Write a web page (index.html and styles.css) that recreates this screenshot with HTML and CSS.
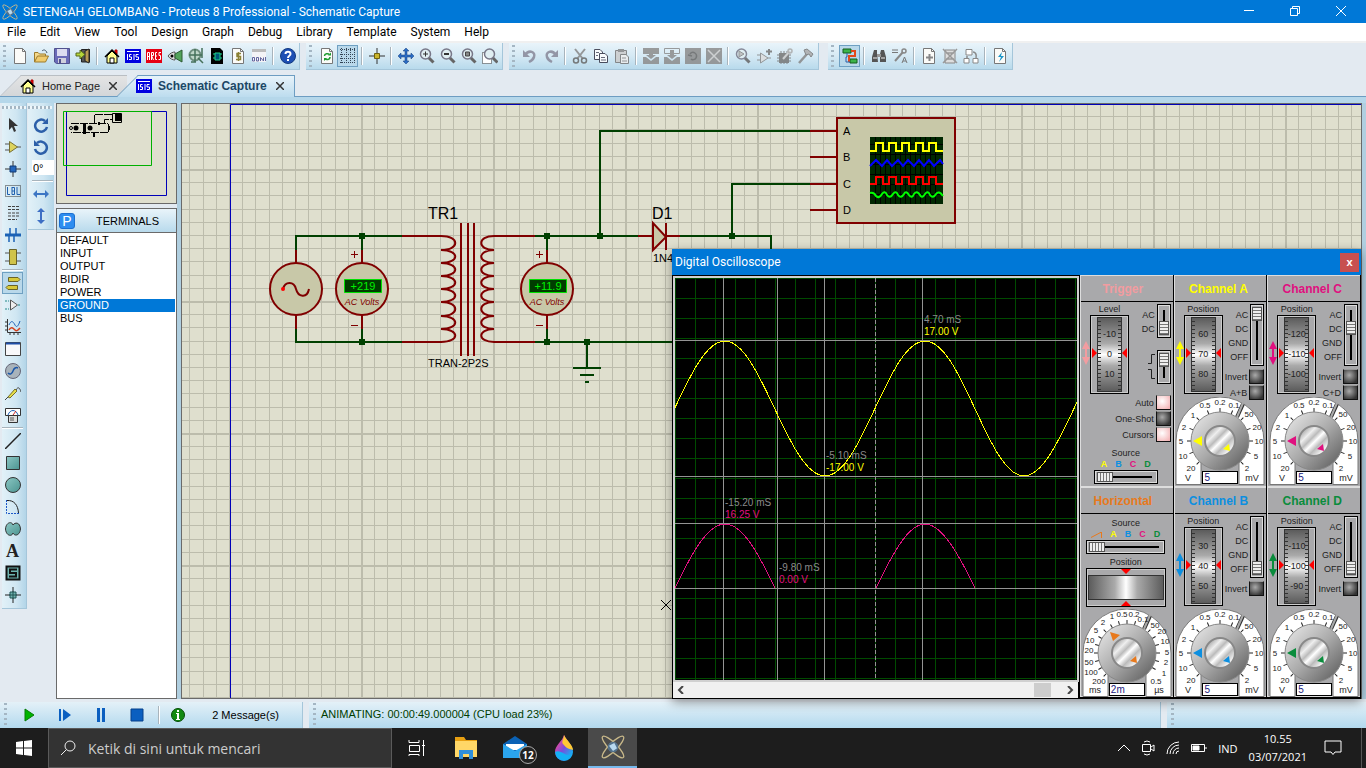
FILE: index.html
```html
<!DOCTYPE html>
<html lang="id">
<head>
  <meta charset="UTF-8" />
  <meta name="viewport" content="width=device-width, initial-scale=1" />
  <title>SETENGAH GELOMBANG - Proteus 8 Professional - Schematic Capture</title>
  <link rel="stylesheet" href="styles.css">
</head>
<body>

<!-- Shared drawings -->
<svg class="defs" aria-hidden="true">
  <defs>
    <linearGradient id="metal" x1="0" y1="0" x2="1" y2="1">
      <stop offset="0" stop-color="#eee"/><stop offset=".5" stop-color="#aaa"/><stop offset="1" stop-color="#555"/>
    </linearGradient>
    <linearGradient id="cap" x1="0" y1="0" x2="1" y2="1">
      <stop offset=".1" stop-color="#999"/><stop offset=".3" stop-color="#eee"/><stop offset=".42" stop-color="#bbb"/><stop offset=".52" stop-color="#fff"/><stop offset=".65" stop-color="#bbb"/><stop offset=".8" stop-color="#eee"/><stop offset="1" stop-color="#888"/>
    </linearGradient>
    <linearGradient id="teal" x1="0" y1="0" x2="1" y2="1">
      <stop offset="0" stop-color="#8cc7c4"/><stop offset="1" stop-color="#4b9490"/>
    </linearGradient>
    <linearGradient id="drop" x1="0" y1="0" x2="1" y2="1">
      <stop offset=".2" stop-color="#e8489b"/><stop offset=".5" stop-color="#7a4ddb"/><stop offset=".8" stop-color="#1fa7f2"/>
    </linearGradient>
    <pattern id="grid" x="98" y="38" width="132" height="132" patternUnits="userSpaceOnUse">
      <path d="M13.5 0V132M26.5 0V132M40.5 0V132M53.5 0V132M66.5 0V132M79.5 0V132M92.5 0V132M106.5 0V132M119.5 0V132M0 13.5H132M0 26.5H132M0 40.5H132M0 53.5H132M0 66.5H132M0 79.5H132M0 92.5H132M0 106.5H132M0 119.5H132" stroke="#bcbcac"/>
      <path d="M0 1H132M1 0V132" stroke="#bcbcac" stroke-width="2"/>
    </pattern>
    <pattern id="div" width="20" height="20" patternUnits="userSpaceOnUse">
      <path d="M.5 0V20M0 .5H20" stroke="#004a00"/>
    </pattern>
    <symbol id="proteus" viewBox="0 0 18 18">
      <g fill="none" stroke="currentColor"><ellipse cx="9" cy="9" rx="11" ry="3" transform="rotate(45 9 9)"/><ellipse cx="9" cy="9" rx="11" ry="3" transform="rotate(-45 9 9)"/></g>
      <circle cx="9" cy="9" r="4" fill="#52718c"/><path d="M6 8L10 6L12 10L9 12Z" fill="#b9d9ef"/>
    </symbol>
    <symbol id="isis" viewBox="0 0 16 14">
      <rect width="16" height="14" fill="#0000e0"/><path d="M2.5 5V11M6.5 5.500H4.500V8H6.500V10.500H4M9 5V11M13.500 5.500H11V8H13.500V10.500H11M2 2.500H14" fill="none" stroke="#fff"/>
    </symbol>
    <symbol id="house" viewBox="0 0 16 16">
      <path d="M11 2H13V6H11Z" fill="red" stroke="#a00"/><path d="M3 8L8 3L13 8V15H3Z" fill="#ffff90" stroke="#000"/><path d="M1 9L8 2L15 9" fill="none" stroke="#000" stroke-width="1.500"/><path d="M6 10H10V15H6Z" fill="#fff" stroke="#000"/>
    </symbol>
    <symbol id="loupe" viewBox="0 0 16 16">
      <path d="M9.500 9.500L14.500 14.500" stroke="#666" stroke-width="3"/><circle cx="6.500" cy="6" r="5" fill="#e0eef2" stroke="#778" stroke-width="1.500"/>
    </symbol>
    <symbol id="page" viewBox="0 0 16 16">
      <path d="M2.500.500H10.500L13.500 3.500V15.500H2.500Z" fill="#fbfbf8" stroke="#777"/><path d="M10.500.500V3.500H13.500" fill="none" stroke="#777"/>
    </symbol>
    <symbol id="updown" viewBox="0 0 8 24">
      <path d="M4 0L8 8H5V16H8L4 24L0 16H3V8H0Z" fill="currentColor"/>
    </symbol>
    <symbol id="volts-dial" viewBox="-45 -44 90 88">
      <path d="M-44 43.500V0A44 44 0 0 1 44 0V43.500H19V20H-19V43.500Z" fill="#fff" stroke="#777"/>
      <path d="M17 -24L23 -37" stroke="#333" stroke-width="4"/><path d="M17 -24L23 -38" stroke="#aaa" stroke-width="2"/>
      <g stroke="#222"><path id="tick" d="M-33 0H-29"/><use href="#tick" transform="rotate(22.500)"/><use href="#tick" transform="rotate(45)"/><use href="#tick" transform="rotate(67.500)"/><use href="#tick" transform="rotate(90)"/><use href="#tick" transform="rotate(112.500)"/><use href="#tick" transform="rotate(135)"/><use href="#tick" transform="rotate(157.500)"/><use href="#tick" transform="rotate(180)"/><use href="#tick" transform="rotate(202.500)"/><use href="#tick" transform="rotate(225)"/><use href="#tick" transform="rotate(-22.500)"/><use href="#tick" transform="rotate(-45)"/></g>
      <circle r="29" fill="url(#metal)" stroke="#888"/><circle r="15" fill="url(#cap)" stroke="#888" stroke-width="2"/>
      <path d="M-27 0L-18 -5V5ZM9 3L10 10L3 8Z" fill="currentColor"/>
      <g class="dial-text"><text x="-29" y="30">20</text><text x="-37" y="18">10</text><text x="-39" y="3">5</text><text x="-36" y="-11">2</text><text x="-27" y="-23">1</text><text x="-15" y="-33">0.5</text><text x="0" y="-36">0.2</text><text x="14" y="-33">0.1</text><text x="29" y="-24">50</text><text x="37" y="-11">20</text><text x="39" y="3">10</text><text x="36" y="18">5</text><text x="27" y="30">2</text></g>
      <g class="dial-unit"><text x="-32" y="40">V</text><text x="32" y="40">mV</text></g>
    </symbol>
    <symbol id="time-dial" viewBox="-45 -44 90 88">
      <path d="M-44 43.500V0A44 44 0 0 1 44 0V43.500H19V20H-19V43.500Z" fill="#fff" stroke="#777"/>
      <path d="M17 -24L23 -37" stroke="#333" stroke-width="4"/><path d="M17 -24L23 -38" stroke="#aaa" stroke-width="2"/>
      <g stroke="#222"><use href="#tick"/><use href="#tick" transform="rotate(15)"/><use href="#tick" transform="rotate(30)"/><use href="#tick" transform="rotate(45)"/><use href="#tick" transform="rotate(60)"/><use href="#tick" transform="rotate(75)"/><use href="#tick" transform="rotate(90)"/><use href="#tick" transform="rotate(105)"/><use href="#tick" transform="rotate(135)"/><use href="#tick" transform="rotate(150)"/><use href="#tick" transform="rotate(165)"/><use href="#tick" transform="rotate(180)"/><use href="#tick" transform="rotate(195)"/><use href="#tick" transform="rotate(210)"/><use href="#tick" transform="rotate(-15)"/><use href="#tick" transform="rotate(-30)"/><use href="#tick" transform="rotate(-45)"/></g>
      <circle r="29" fill="url(#metal)" stroke="#888"/><circle r="15" fill="url(#cap)" stroke="#888" stroke-width="2"/>
      <path d="M-17 -21L-7 -18L-14 -12ZM9 3L10 10L3 8Z" fill="currentColor"/>
      <g class="dial-text"><text x="-28" y="31">200</text><text x="-36" y="22">100</text><text x="-38" y="12">50</text><text x="-38" y="0">20</text><text x="-37" y="-10">10</text><text x="-31" y="-20">5</text><text x="-24" y="-28">2</text><text x="-15" y="-34">1</text><text x="-5" y="-36">0.5</text><text x="7" y="-36">0.2</text><text x="16" y="-31">0.1</text><text x="28" y="-25">50</text><text x="35" y="-19">20</text><text x="38" y="-9">10</text><text x="40" y="2">5</text><text x="39" y="12">2</text><text x="37" y="23">1</text><text x="29" y="31">0.5</text></g>
      <g class="dial-unit"><text x="-32" y="40">ms</text><text x="32" y="40">µs</text></g>
    </symbol>
  </defs>
</svg>

<header class="titlebar">
  <svg class="app-icon"><use href="#proteus"/></svg>
  <h1>SETENGAH GELOMBANG - Proteus 8 Professional - Schematic Capture</h1>
  <button aria-label="Minimize"><svg viewBox="0 0 12 12"><path d="M1 5.500H11" /></svg></button>
  <button aria-label="Restore"><svg viewBox="0 0 12 12"><path d="M1.500 3.500H8.500V10.500H1.500ZM3.500 3V1.500H10.500V8.500H9"/></svg></button>
  <button aria-label="Close"><svg viewBox="0 0 12 12"><path d="M1 1L11 11M11 1L1 11"/></svg></button>
</header>

<nav class="menubar">
  <a href="#">File</a><a href="#">Edit</a><a href="#">View</a><a href="#">Tool</a><a href="#">Design</a><a href="#">Graph</a><a href="#">Debug</a><a href="#">Library</a><a href="#">Template</a><a href="#">System</a><a href="#">Help</a>
</nav>

<div class="toolbars">
  <div class="group first">
    <button aria-label="New"><svg viewBox="0 0 16 16"><use href="#page"/></svg></button>
    <button aria-label="Open"><svg viewBox="0 0 16 16"><path d="M1.500 14V4.500H5L6.500 6H12.500V8" fill="#f5d98b" stroke="#9c7a2b"/><path d="M1.500 14L4.500 8H15.500L12.500 14Z" fill="#f0cb6c" stroke="#9c7a2b"/><path d="M9 3C11 1 13 2 14 5" fill="none" stroke="#456"/></svg></button>
    <button aria-label="Save"><svg viewBox="0 0 16 16"><path d="M.500.500H15.500V15.500H2.500L.500 14Z" fill="#6a6bb8" stroke="#51528e"/><path d="M3 1H13V8H3Z" fill="#dcdcf0"/><path d="M4 10H12V15H4Z" fill="#d0d0dc"/><path d="M5 11H7V15H5Z" fill="#51528e"/></svg></button>
    <button aria-label="Exit"><svg viewBox="0 0 16 16"><path d="M6.500 1.500H14.500V14H6.500Z" fill="#555" stroke="#222"/><path d="M10 3L14 1V15L10 13Z" fill="#b99a54" stroke="#222"/><path d="M1 5H5V2L10 6.500L5 11V8H1Z" fill="#b6d63a" stroke="#55661c"/></svg></button>
    <i class="sep"></i>
    <button aria-label="Home"><svg viewBox="0 0 16 16"><use href="#house"/></svg></button>
    <button aria-label="Schematic"><svg viewBox="0 0 16 14"><use href="#isis"/></svg></button>
    <button aria-label="PCB layout"><svg viewBox="0 0 16 16"><path d="M0 1H16V15H0Z" fill="#e60012"/><path d="M1.500 12V4.500H3.500V12M1 8.500H4M5.500 12V4.500H7.500V7.500H5.500L7.500 12M11 4.500H9.500V11.500H11M9.500 8H11M15 4.500H13V7.500H14.500V11.500H12.500" fill="none" stroke="#fff"/></svg></button>
    <button aria-label="3D viewer"><svg viewBox="0 0 16 16"><path d="M1 8C3 5 6 4 8 4V12C6 12 3 11 1 8Z" fill="#ddd" stroke="#555"/><circle cx="5" cy="8" r="1.500"/><path d="M8 6L15 2V14L8 10Z" fill="#52a35b" stroke="#2c5a32"/></svg></button>
    <button aria-label="Gerber viewer"><svg viewBox="0 0 16 16"><circle cx="7" cy="7" r="5.500" fill="#bfd6c8" stroke="#6f8f7f" stroke-width="2"/><path d="M1 7H14M7 1V14M10 10L15 15M14 0V10M3 14H8" stroke="#45705a" stroke-width="1.500"/></svg></button>
    <button aria-label="Design explorer"><svg viewBox="0 0 16 16"><path d="M2 0H11L14 3V16H2Z" fill="#000"/><path d="M6 5H11V12H6ZM4 6H6M4 10H6M11 6H13M11 10H13" fill="#057" stroke="#1fd08b"/></svg></button>
    <button aria-label="Bill of materials"><svg viewBox="0 0 16 16"><use href="#page"/><path d="M11 5.500H7V8.500H10.500V11.500H6M8.500 4V13" fill="none" stroke="#8b8133" stroke-width="1.500"/></svg></button>
    <button aria-label="Source code"><svg viewBox="0 0 16 16"><path d="M1 1H15V4H1Z" fill="#bbb"/><path d="M1 4H15V14H1Z" fill="#f3f3f6"/><path d="M1.500 9.500H3.500V13H1.500ZM5.500 9.500H7.500V13H5.500ZM9.500 13V9.500L12.500 13V9.500M14.500 9V13" fill="none" stroke="#63669f"/></svg></button>
    <i class="sep"></i>
    <button aria-label="Help"><svg viewBox="0 0 16 16"><circle cx="8" cy="8" r="7.500" fill="#1e50b4" stroke="#123a80"/><path d="M5.500 6C5.500 3 10.500 3 10.500 6C10.500 8 8 7.500 8 10" fill="none" stroke="#fff" stroke-width="2"/><path d="M7 11H9V13H7Z" fill="#fff"/></svg></button>
  </div>

  <div class="group">
    <button aria-label="Redraw"><svg viewBox="0 0 16 16"><use href="#page"/><path d="M5.500 8C5.500 5.500 9 5 10.500 6.500M11 9C11 12 7 12 6 10.500" fill="none" stroke="#1d9b2d" stroke-width="1.500"/><path d="M9 7.500H12V4.500ZM8 10H5V13Z" fill="#1d9b2d"/></svg></button>
    <button class="on" aria-label="Grid"><svg viewBox="0 0 16 16"><path d="M0 1.500H16M0 6.500H16M0 10.500H16M0 14.500H16M1.500 0V16M6.500 0V16M10.500 0V16M14.500 0V16" stroke="#345" stroke-dasharray="1 1"/></svg></button>
    <i class="sep"></i>
    <button aria-label="Origin"><svg viewBox="0 0 16 16"><path d="M8 0V16M0 8H16" stroke="#333"/><path d="M5.500 5.500H10.500V10.500H5.500Z" fill="#c9b52c" stroke="#6f6210"/></svg></button>
    <i class="sep"></i>
    <button aria-label="Pan"><svg viewBox="0 0 16 16"><path d="M8 0L11 3H9V7H13V5L16 8L13 11V9H9V13H11L8 16L5 13H7V9H3V11L0 8L3 5V7H7V3H5Z" fill="#2a6cc4" stroke="#173f7d" stroke-width=".500"/></svg></button>
    <button aria-label="Zoom in"><svg viewBox="0 0 16 16"><use href="#loupe"/><path d="M4 6H9M6.500 3.500V8.500" stroke="#333"/></svg></button>
    <button aria-label="Zoom out"><svg viewBox="0 0 16 16"><use href="#loupe"/><path d="M4 6H9" stroke="#333" stroke-width="2"/></svg></button>
    <button aria-label="Zoom all"><svg viewBox="0 0 16 16"><use href="#loupe"/><path d="M4.500 4H8.500V8H4.500Z" fill="#888" stroke="#444"/></svg></button>
    <button aria-label="Zoom area"><svg viewBox="0 0 16 16"><path d="M.500 4.500H9.500V15.500H.500Z" fill="#fff" stroke="#333" stroke-dasharray="1 1"/><use href="#loupe" x="1"/></svg></button>
  </div>

  <div class="group dim">
    <button aria-label="Undo"><svg viewBox="0 0 16 16"><path d="M3 7C7 1 14 4 12 9C11 12 9 13 7 14" fill="none" stroke="#889" stroke-width="2.500"/><path d="M1 2V9H8Z" fill="#889"/></svg></button>
    <button aria-label="Redo"><svg viewBox="0 0 16 16"><path d="M13 7C9 1 2 4 4 9C5 12 7 13 9 14" fill="none" stroke="#889" stroke-width="2.500"/><path d="M15 2V9H8Z" fill="#889"/></svg></button>
    <i class="sep"></i>
    <button aria-label="Cut"><svg viewBox="0 0 16 16"><path d="M3 1L11 11M13 1L5 11" stroke="#888" stroke-width="2"/><circle cx="4" cy="12.500" r="2.500" fill="none" stroke="#666" stroke-width="1.500"/><circle cx="12" cy="12.500" r="2.500" fill="none" stroke="#666" stroke-width="1.500"/></svg></button>
    <button aria-label="Copy"><svg viewBox="0 0 16 16"><path d="M1.500 1.500H7L9.500 4V11.500H1.500Z" fill="#fff" stroke="#334"/><path d="M6.500 5.500H12L14.500 8V14.500H6.500Z" fill="#fff" stroke="#334"/><path d="M3 4.500H6M3 7.500H5M8 9.500H12M8 12H13" stroke="#556"/></svg></button>
    <button aria-label="Paste"><svg viewBox="0 0 16 16"><path d="M1.500 2.500H12.500V14.500H1.500Z" fill="#ccc" stroke="#777"/><path d="M4 1H10V4H4Z" fill="#888"/><path d="M6.500 6.500H12L14.500 9V15.500H6.500Z" fill="#eee" stroke="#777"/><path d="M8 10H12M8 13H13" stroke="#888"/></svg></button>
    <i class="sep"></i>
    <button aria-label="Block copy"><svg viewBox="0 0 16 16"><path d="M0 0H16V6H10V7H13L8 11L3 7H6V6H0ZM0 9H3L8 13L13 9H16V16H0Z" fill="#8c8c8c"/></svg></button>
    <button aria-label="Block move"><svg viewBox="0 0 16 16"><path d="M.500.500H15.500V5.500H.500Z" fill="none" stroke="#8c8c8c"/><path d="M6 2H10V7H13L8 11L3 7H6ZM0 9H3L8 13L13 9H16V16H0Z" fill="#8c8c8c"/></svg></button>
    <button aria-label="Block rotate"><svg viewBox="0 0 16 16"><path d="M0 0H16V16H0Z" fill="#8c8c8c"/><path d="M5 6C8 2 13 6 11 10C10 12 7 12 6 11M3 7L7 8" fill="none" stroke="#666" stroke-width="1.500"/></svg></button>
    <button aria-label="Block delete"><svg viewBox="0 0 16 16"><path d="M0 0H16V16H0Z" fill="#8c8c8c"/><path d="M2 2L14 14M14 2L2 14" stroke="#ccc" stroke-width="1.500"/></svg></button>
    <i class="sep"></i>
    <button aria-label="Pick parts"><svg viewBox="0 0 16 16"><use href="#loupe"/><path d="M4 3L9 6L4 9Z" fill="#bbb" stroke="#888"/></svg></button>
    <button aria-label="Make device"><svg viewBox="0 0 16 16"><path d="M4.500 5V15L12 10ZM1 7H4M1 12H4M12 10H15" fill="#ddd" stroke="#888"/><path d="M10 3.500H16M13 1V7" stroke="#777" stroke-width="2"/></svg></button>
    <button aria-label="Packaging tool"><svg viewBox="0 0 16 16"><path d="M2 5H12V15H2Z" fill="#777"/><path d="M0 7H14M0 10H14M0 13H14M4 3V16M7 3V16M10 3V16" stroke="#777"/><path d="M6 11L13 3" stroke="#ccc" stroke-width="2"/><circle cx="13" cy="3" r="2" fill="none" stroke="#aaa" stroke-width="1.500"/></svg></button>
    <button aria-label="Decompose"><svg viewBox="0 0 16 16"><path d="M1 15L9 6" stroke="#888" stroke-width="2.500"/><path d="M6 2L9 1L15 6L13 9L11 6L8 7Z" fill="#aaa" stroke="#777"/></svg></button>
  </div>

  <div class="group last">
    <button class="on" aria-label="Wire autorouter"><svg viewBox="0 0 16 16"><path d="M1 1H9V5H1ZM8 11H15V15H8Z" fill="#3bb44a" stroke="#145c1e"/><path d="M9 3H13V8H7V13H8" fill="none" stroke="#e2491b" stroke-width="2"/><path d="M5 5V9H4V14H8" fill="none" stroke="#2a5fa8"/></svg></button>
    <i class="sep"></i>
    <button aria-label="Search"><svg viewBox="0 0 16 16"><path d="M3 2H6V6L7 14H1V9ZM10 2H13L15 9V14H9V6Z" fill="#555"/><path d="M6 6H10V9H6Z" fill="#999"/><path d="M2 10H6M10 10H14" stroke="#eee"/></svg></button>
    <button aria-label="Property assignment"><svg viewBox="0 0 16 16"><path d="M0 2H6M0 4.500H6" stroke="#777"/><path d="M3 13L11 4" stroke="#888" stroke-width="2"/><circle cx="12" cy="3" r="2" fill="none" stroke="#888" stroke-width="1.500"/><path d="M10 15L12.500 9L15 15M11 13H14" fill="none" stroke="#777"/></svg></button>
    <i class="sep"></i>
    <button aria-label="New sheet"><svg viewBox="0 0 16 16"><use href="#page"/><path d="M8.500 6V13M5 9.500H12" stroke="#888" stroke-width="2"/></svg></button>
    <button aria-label="Remove sheet"><svg viewBox="0 0 16 16"><path d="M3 2H13V15H3Z" fill="#ddd" stroke="#888"/><path d="M1 1L15 15M15 1L1 15M4 5H12M4 11H12" stroke="#999" stroke-width="1.500"/></svg></button>
    <button aria-label="Exit sheet"><svg viewBox="0 0 16 16"><path d="M3 1.500H9V7H3ZM1 10.500H6V15H1ZM10 10.500H15V15H10Z" fill="#fff" stroke="#888"/><path d="M4 10V8M13 10C14 6 12 4 10 4" fill="none" stroke="#888" stroke-width="1.500"/></svg></button>
    <i class="sep"></i>
    <button aria-label="Electrical check"><svg viewBox="0 0 16 16"><use href="#page"/><path d="M10 4L6 9H9L7 14L12 8H9Z" fill="#1b96c9"/></svg></button>
  </div>
</div>

<nav class="tabs">
  <div class="tab">
    <svg class="icon"><use href="#house"/></svg><a href="#">Home Page</a>
    <button aria-label="Close tab"><svg viewBox="0 0 8 8"><path d="M0 0L8 8M8 0L0 8"/></svg></button>
  </div>
  <div class="tab active">
    <svg class="icon"><use href="#isis"/></svg><a href="#">Schematic Capture</a>
    <button aria-label="Close tab"><svg viewBox="0 0 8 8"><path d="M0 0L8 8M8 0L0 8"/></svg></button>
  </div>
</nav>

<main class="workspace">
  <div class="mode-bar">
    <button aria-label="Selection"><svg viewBox="0 0 16 16"><path d="M4 1V13L7 10L9 15L11 14L9 9H13Z" fill="#333"/></svg></button>
    <button aria-label="Component"><svg viewBox="0 0 16 16"><path d="M0 5H4M0 11H4M12 8H16" stroke="#555"/><path d="M4.500 2.500V13.500L12.500 8Z" fill="#ddd35c" stroke="#777033"/></svg></button>
    <button aria-label="Junction dot"><svg viewBox="0 0 16 16"><path d="M8 0V16M0 8H16" stroke="#333"/><path d="M5 5H11V11H5Z" fill="#2467bd" stroke="#123a73"/></svg></button>
    <button aria-label="Wire label"><svg viewBox="0 0 16 16"><path d="M.500 2.500H15.500V13.500H.500Z" fill="none" stroke="#333" stroke-dasharray="1 1"/><path d="M2.500 4V11.500H5M7 4V11.500H9.500V4.500H7M7 8H9M12 4V11.500H15" fill="none" stroke="#1f5fae"/></svg></button>
    <button aria-label="Text script"><svg viewBox="0 0 16 16"><path d="M3 1.500H14M3 4.500H14M3 8H14M3 11H14M3 14.500H12" stroke="#444" stroke-dasharray="3 1"/></svg></button>
    <button aria-label="Bus"><svg viewBox="0 0 16 16"><path d="M0 8H16" stroke="#1b62b5" stroke-width="3"/><path d="M5 1V8M11 1V8M4 9V15M9 9V15" stroke="#1b62b5" stroke-width="1.500"/></svg></button>
    <button aria-label="Subcircuit"><svg viewBox="0 0 16 16"><path d="M0 4H4M0 12H4M12 4H16M12 12H16" stroke="#555"/><path d="M4.500.500H11.500V15.500H4.500Z" fill="#d0c44b" stroke="#6a6327"/></svg></button>
    <i class="sep"></i>
    <button class="on" aria-label="Terminals"><svg viewBox="0 0 16 16"><path d="M3.500 2.500H13L15 4.500L13 6.500H3.500ZM12.500 10.500H3L1 12.500L3 14.500H12.500Z" fill="#d6c83a" stroke="#6a6327"/></svg></button>
    <button aria-label="Device pins"><svg viewBox="0 0 16 16"><path d="M0 4H4M0 12H4M13 8H16" stroke="#288" stroke-dasharray="2 1"/><path d="M5.500 3V13L12.500 8Z" fill="#eee" stroke="#555"/></svg></button>
    <button aria-label="Graph"><svg viewBox="0 0 16 16"><path d="M2.500 0V13.500H16M0 3H2M0 7H2M0 11H2M5 14V16M9 14V16M13 14V16" fill="none" stroke="#333"/><path d="M4 6C6 1 8 2 10 6S14 5 15 2" fill="none" stroke="#1e62b8"/><path d="M4 11C6 7 8 9 10 11S14 10 15 9" fill="none" stroke="#d2401d" stroke-width="1.500"/></svg></button>
    <button aria-label="Popup"><svg viewBox="0 0 16 16"><path d="M.500 1.500H15.500V14.500H.500Z" fill="#f8f8fa" stroke="#444"/><path d="M1 2.500H15" stroke="#1e4ea8" stroke-width="2"/></svg></button>
    <button aria-label="Generator"><svg viewBox="0 0 16 16"><circle cx="8" cy="8" r="7.500" fill="#a8b3bb" stroke="#667"/><path d="M3 10C5 12 7 11 8 8S11 4 13 5" fill="none" stroke="#1b57a8" stroke-width="1.500"/></svg></button>
    <button aria-label="Probe"><svg viewBox="0 0 16 16"><path d="M0 15L4 11M11 5C13 1 15 3 16 7" fill="none" stroke="#444"/><path d="M3 12L10 4L12 6L5 13Z" fill="#e6df4a" stroke="#77702a"/></svg></button>
    <button aria-label="Instruments"><svg viewBox="0 0 16 16"><path d="M.500 1.500H15.500V8.500H.500Z" fill="#fff" stroke="#333"/><path d="M3 8C5 2 11 2 13 8" fill="none" stroke="#1e62b8"/><path d="M8 8L11 4" stroke="#c22"/><path d="M3.500 8.500H12.500V15.500H3.500Z" fill="#ddd" stroke="#333"/><path d="M5 11H9M5 13H9" stroke="#555"/></svg></button>
    <i class="sep"></i>
    <button aria-label="Line"><svg viewBox="0 0 16 16"><path d="M0 16L16 0" stroke="#222" stroke-width="1.500"/></svg></button>
    <button aria-label="Box"><svg viewBox="0 0 16 16"><path d="M1.500 1.500H14.500V14.500H1.500Z" fill="url(#teal)" stroke="#333"/></svg></button>
    <button aria-label="Circle"><svg viewBox="0 0 16 16"><circle cx="8" cy="8" r="7.500" fill="url(#teal)" stroke="#333"/></svg></button>
    <button aria-label="Arc"><svg viewBox="0 0 16 16"><path d="M1.500 1V14.500H14" fill="none" stroke="#1b57c8" stroke-dasharray="2 1"/><path d="M2 1.500C9 1 13 6 13.500 14" fill="none" stroke="#222"/></svg></button>
    <button aria-label="Closed path"><svg viewBox="0 0 16 16"><path d="M8 4C7 0 1 1 .500 8C1 15 7 16 8 12C10 16 15 14 15.500 8C15 1 10 1 8 4Z" fill="url(#teal)" stroke="#333"/></svg></button>
    <button class="letter" aria-label="Text">A</button>
    <button aria-label="Symbol"><svg viewBox="0 0 16 16"><path d="M1.500 1.500H14.500V14.500H1.500Z" fill="#6db3ae" stroke="#111" stroke-width="2"/><path d="M12 4.500H5V8H11V11.500H4" fill="none" stroke="#111" stroke-width="2"/></svg></button>
    <button aria-label="Marker"><svg viewBox="0 0 16 16"><path d="M8 0V16M0 8H16" stroke="#222"/><path d="M5 5H11V11H5Z" fill="#6db3ae" stroke="#255"/><path d="M8 4V12M4 8H12" stroke="#255"/></svg></button>
  </div>

  <div class="mode-bar orient">
    <button aria-label="Rotate clockwise"><svg viewBox="0 0 16 16"><path d="M12 4A6 6 0 1 0 14 10" fill="none" stroke="#2c5fa9" stroke-width="2.500"/><path d="M15 1V7H9Z" fill="#2c5fa9"/></svg></button>
    <button aria-label="Rotate anti-clockwise"><svg viewBox="0 0 16 16"><path d="M4 4A6 6 0 1 1 2 10" fill="none" stroke="#2c5fa9" stroke-width="2.500"/><path d="M1 1V7H7Z" fill="#2c5fa9"/></svg></button>
    <input type="text" value="0°" aria-label="Angle">
    <i class="sep"></i>
    <button aria-label="Mirror X"><svg viewBox="0 0 16 16"><path d="M0 8L4 4V7H12V4L16 8L12 12V9H4V12Z" fill="#3d76c4"/></svg></button>
    <button aria-label="Mirror Y"><svg viewBox="0 0 16 16"><path d="M8 0L12 4H9V12H12L8 16L4 12H7V4H4Z" fill="#3d6ec4"/></svg></button>
  </div>

  <aside class="side">
    <svg class="overview" viewBox="0 0 119 99">
      <path d="M9.500 7.500H109.500V91.500H9.500Z" fill="none" stroke="#0000b8"/>
      <path d="M6.500 7.500H94.500V61.500H6.500Z" fill="none" stroke="#00b000"/>
      <g fill="none" stroke="#000"><path d="M14 19.500H51M37.500 19V10.500H55M47.500 19V15.500H55M51.500 20V28.500H14" stroke-dasharray="8 1"/><path d="M55.500 9.500H64.500V18.500H55.500Z"/></g>
      <path d="M58 10H65V17H58ZM26 19H29V30H26ZM51 22H53V26H51ZM36 29H38V33H36ZM41 18H43V21H41Z"/><circle cx="19" cy="24" r="2.500"/><circle cx="33" cy="24" r="2.500"/><circle cx="14" cy="24" r="1.500" fill="none" stroke="#000"/>
    </svg>
    <div class="list-head"><button>P</button><h2>TERMINALS</h2></div>
    <ul class="terminals">
      <li>DEFAULT</li>
      <li>INPUT</li>
      <li>OUTPUT</li>
      <li>BIDIR</li>
      <li>POWER</li>
      <li class="selected">GROUND</li>
      <li>BUS</li>
    </ul>
  </aside>

  <section class="sheet">
    <svg>
      <g transform="translate(-182 -104)">
        <g transform="translate(131 131)"><rect x="51" y="-27" width="3000" height="2000" fill="url(#grid)"/></g>
        <path d="M4000 104.500H230.500V3000" fill="none" stroke="#0000b8"/>

        <g class="wire">
          <path d="M296 250V236H402M362 236V250M296 329V342H402M362 329V342"/>
          <path d="M535 236H638M547 236V250M600 236V131H810M547 329V342M535 342H700M587 342V368M573 368H601M580 375H594M585 382H589"/>
          <path d="M680 236H771V260M732 236V184H810"/>
        </g>
        <path d="M359 233H365V239H359ZM359 339H365V345H359ZM544 233H550V239H544ZM544 339H550V345H544ZM597 233H603V239H597ZM584 339H590V345H584ZM729 233H735V239H729Z" fill="#004000"/>

        <g class="part">
          <path d="M296 250V264M296 315V329M362 250V264M362 315V329M547 250V264M547 315V329M402 236H441M402 342H442M494 236H535M494 342H535"/>
          <circle cx="296" cy="289" r="26"/><circle cx="362" cy="289" r="26"/><circle cx="547" cy="289" r="26"/>
          <path d="M283 289C285 281 294 281 296 289S307 299 309 289" fill="none"/>
          <path d="M441 236C460 236 460 250 441 250C460 250 460 263 441 263C460 263 460 276 441 276C460 276 460 289 441 289C460 289 460 302 441 302C460 302 460 316 441 316C460 316 460 329 441 329C460 329 460 342 441 342" fill="none"/>
          <path d="M494 236C477 236 477 250 494 250C477 250 477 263 494 263C477 263 477 276 494 276C477 276 477 289 494 289C477 289 477 302 494 302C477 302 477 316 494 316C477 316 477 329 494 329C477 329 477 342 494 342" fill="none"/>
          <path d="M461 223V356M468 223V356M474 223V356"/>
          <path d="M638 236H653M666 236H680M653 223V250L666 237ZM666 223V250"/>
          <path d="M810 131H837M810 157H837M810 184H837M810 210H837M837 118H955V223H837Z"/>
        </g>
        <circle cx="283" cy="289" r="2" fill="red"/>
        <path d="M351 254.500H358M354.500 251V258M351 325.500H358M536 254.500H543M539.500 251V258M536 325.500H543" stroke="#800000"/>
        <path d="M344.500 279.500H381.500V292.500H344.500ZM529.500 279.500H566.500V292.500H529.500Z" fill="#003c00" stroke="#00e000"/>
        <g class="readout"><text x="363" y="290">+219</text><text x="548" y="290">+11.9</text></g>
        <g class="unit"><text x="362" y="305">AC Volts</text><text x="547" y="305">AC Volts</text></g>

        <path d="M870 137H943V204H870Z" fill="#002800"/>
        <path d="M875.500 137V204M880.500 137V204M885.500 137V204M890.500 137V204M895.500 137V204M900.500 137V204M905.500 137V204M910.500 137V204M915.500 137V204M920.500 137V204M925.500 137V204M930.500 137V204M935.500 137V204M870 144.500H943M870 154.500H943M870 164.500H943M870 174.500H943M870 184.500H943M870 194.500H943" stroke="#000"/>
        <g fill="none" stroke-width="2">
          <path d="M870 151H876V143H883V151H889V143H896V151H902V143H909V151H916V143H923V151H929V143H936V151H943" stroke="#ff0"/>
          <path d="M870 166L876 160L882 166L887 160L892 166L898 160L903 166L908 160L914 166L919 160L924 166L929 160L934 166L940 160L943 164" stroke="#00f"/>
          <path d="M870 184H876V177H883V184H889V177H896V184H902V177H909V184H916V177H923V184H929V177H936V184H943" stroke="#f00"/>
          <path d="M870 193Q874 192 876 196Q879 199 882 194Q885 190 887 195Q890 199 893 194Q896 190 898 195Q901 199 904 194Q906 190 909 195Q912 199 914 194Q917 190 920 195Q922 199 925 194Q928 190 930 195Q933 199 936 194Q939 190 943 196" stroke="#0f0"/>
        </g>
        <g class="label"><text x="843" y="135">A</text><text x="843" y="161">B</text><text x="843" y="188">C</text><text x="843" y="214">D</text><text x="428" y="367">TRAN-2P2S</text><text x="653" y="262">1N4</text></g>
        <g class="name"><text x="428" y="219">TR1</text><text x="652" y="219">D1</text></g>
        <path d="M661 600L671 610M671 600L661 610" stroke="#000"/>
      </g>
    </svg>
  </section>

  <section class="scope">
    <header><h2>Digital Oscilloscope</h2><button aria-label="Close">x</button></header>
    <div class="scope-body">
      <div class="plot">
        <svg viewBox="0 0 402 402">
          <rect width="402" height="402" fill="url(#div)"/>
          <path d="M48.500 0V402M102.500 0V402M149.500 0V402M247.500 0V402M0 62.500H402M0 198.500H402M0 245.500H402M0 310.500H402" stroke="#949494"/>
          <path d="M200.500 0V402" stroke="#949494" stroke-dasharray="4 2"/>
          <path class="trace-a" d="M-50 198C-14 198 13 63 50 63C86 63 113 198 150 198S213 63 250 63S313 198 349 198S413 63 449 63"/>
          <path class="trace-c" d="M0 310C16 277 32 246 50 246S84 277 100 310M201 310C217 277 233 246 250 246S284 277 300 310"/>
          <g class="time"><text x="249" y="45">4.70 mS</text><text x="151" y="181">-5.10 mS</text><text x="50" y="228">-15.20 mS</text><text x="104" y="293">-9.80 mS</text></g>
          <g class="va"><text x="249" y="57">17.00 V</text><text x="151" y="193">-17.00 V</text></g>
          <g class="vc"><text x="50" y="240">16.25 V</text><text x="104" y="305">0.00 V</text></g>
        </svg>
        <div class="scroll">
          <button aria-label="Scroll left"><svg viewBox="0 0 8 8"><path d="M6 0L2 4L6 8"/></svg></button>
          <input type="range" min="0" max="100" value="97" aria-label="Time position">
          <button aria-label="Scroll right"><svg viewBox="0 0 8 8"><path d="M2 0L6 4L2 8"/></svg></button>
        </div>
      </div>

      <div class="panels">
        <section class="panel trigger">
          <h3>Trigger</h3>
          <div class="upper">
            <svg class="updown"><use href="#updown"/></svg>
            <div class="position"><span>Level</span><div class="wheel"><div class="drum"><b>-10</b><b>0</b><b>10</b></div></div></div>
            <div class="switches">
              <div class="coupling"><ul><li>AC</li><li>DC</li></ul><input type="range" min="0" max="1" value="1" aria-label="Trigger coupling"></div>
              <div class="coupling edge"><svg viewBox="0 0 8 34"><path d="M1 14.500H4.500V5.500H8M1 20.500H4.500V29.500H8"/></svg><input type="range" min="0" max="1" value="0" aria-label="Trigger edge"></div>
            </div>
          </div>
          <div class="options">
            <label>Auto<input type="checkbox" checked></label>
            <label>One-Shot<input type="checkbox"></label>
            <label>Cursors<input type="checkbox" checked></label>
          </div>
          <div class="source">
            <label for="trigger-source">Source</label>
            <p><b class="a">A</b><b class="b">B</b><b class="c">C</b><b class="d">D</b></p>
            <input type="range" id="trigger-source" min="0" max="3" value="0">
          </div>
        </section>

        <section class="panel ch-a">
          <h3>Channel A</h3>
          <div class="upper">
            <svg class="updown"><use href="#updown"/></svg>
            <div class="position"><span>Position</span><div class="wheel"><div class="drum"><b>60</b><b>70</b><b>80</b></div></div></div>
            <div class="switches">
              <div class="coupling"><ul><li>AC</li><li>DC</li><li>GND</li><li>OFF</li></ul><input type="range" min="0" max="3" value="0" aria-label="Channel A coupling"></div>
              <label>Invert<input type="checkbox"></label>
              <label>A+B<input type="checkbox"></label>
            </div>
          </div>
          <div class="dial"><svg><use href="#volts-dial"/></svg><input type="text" value="5" aria-label="Channel A volts"></div>
        </section>

        <section class="panel ch-c">
          <h3>Channel C</h3>
          <div class="upper">
            <svg class="updown"><use href="#updown"/></svg>
            <div class="position"><span>Position</span><div class="wheel"><div class="drum"><b>-120</b><b>-110</b><b>-100</b></div></div></div>
            <div class="switches">
              <div class="coupling"><ul><li>AC</li><li>DC</li><li>GND</li><li>OFF</li></ul><input type="range" min="0" max="3" value="1" aria-label="Channel C coupling"></div>
              <label>Invert<input type="checkbox"></label>
              <label>C+D<input type="checkbox"></label>
            </div>
          </div>
          <div class="dial"><svg><use href="#volts-dial"/></svg><input type="text" value="5" aria-label="Channel C volts"></div>
        </section>

        <section class="panel horizontal">
          <h3>Horizontal</h3>
          <div class="timebase">
            <div class="source">
              <label for="time-source">Source</label>
              <p><svg viewBox="0 0 11 6"><path d="M0 5.500L10.500 0V6"/></svg><b class="a">A</b><b class="b">B</b><b class="c">C</b><b class="d">D</b></p>
              <input type="range" id="time-source" min="0" max="4" value="0">
            </div>
            <span>Position</span>
            <div class="wheel flat"><div class="drum"></div></div>
          </div>
          <div class="dial"><svg><use href="#time-dial"/></svg><input type="text" value="2m" aria-label="Time base"></div>
        </section>

        <section class="panel ch-b">
          <h3>Channel B</h3>
          <div class="upper">
            <svg class="updown"><use href="#updown"/></svg>
            <div class="position"><span>Position</span><div class="wheel"><div class="drum"><b>30</b><b>40</b><b>50</b></div></div></div>
            <div class="switches">
              <div class="coupling"><ul><li>AC</li><li>DC</li><li>GND</li><li>OFF</li></ul><input type="range" min="0" max="3" value="3" aria-label="Channel B coupling"></div>
              <label>Invert<input type="checkbox"></label>
            </div>
          </div>
          <div class="dial"><svg><use href="#volts-dial"/></svg><input type="text" value="5" aria-label="Channel B volts"></div>
        </section>

        <section class="panel ch-d">
          <h3>Channel D</h3>
          <div class="upper">
            <svg class="updown"><use href="#updown"/></svg>
            <div class="position"><span>Position</span><div class="wheel"><div class="drum"><b>-110</b><b>-100</b><b>-90</b></div></div></div>
            <div class="switches">
              <div class="coupling"><ul><li>AC</li><li>DC</li><li>GND</li><li>OFF</li></ul><input type="range" min="0" max="3" value="3" aria-label="Channel D coupling"></div>
              <label>Invert<input type="checkbox"></label>
            </div>
          </div>
          <div class="dial"><svg><use href="#volts-dial"/></svg><input type="text" value="5" aria-label="Channel D volts"></div>
        </section>
      </div>
    </div>
  </section>
</main>

<!-- Simulation bar -->
<div class="statusbar">
  <div class="transport">
    <button aria-label="Play"><svg viewBox="0 0 14 14"><path d="M3 1L12 7L3 13Z" fill="#00b400" stroke="#067a06"/></svg></button>
    <button aria-label="Step"><svg viewBox="0 0 14 14"><path d="M1 1H3V13H1ZM5 1L13 7L5 13Z" fill="#0b5fc0"/></svg></button>
    <button aria-label="Pause"><svg viewBox="0 0 14 14"><path d="M3 0H6V14H3ZM8 0H11V14H8Z" fill="#0b5fc0"/></svg></button>
    <button aria-label="Stop"><svg viewBox="0 0 14 14"><path d="M1 1H13V13H1Z" fill="#0b5fc0" stroke="#07408a"/></svg></button>
    <i class="sep"></i>
    <button class="info" aria-label="Messages"><svg viewBox="0 0 14 14"><circle cx="7" cy="7" r="6.500" fill="#128a12" stroke="#064d06"/><path d="M6 2H8V4H6ZM5 5H8V11H9V12H5V11H6V6H5Z" fill="#fff"/></svg></button>
    <span>2 Message(s)</span>
  </div>
  <p>ANIMATING: 00:00:49.000004 (CPU load 23%)</p>
  <div class="tail"></div>
</div>

<footer class="taskbar">
  <button class="start" aria-label="Start"><svg viewBox="0 0 16 16"><path d="M0 2L7 1V7.500H0ZM8 1L16 0V7.500H8ZM0 8.500H7V15L0 14ZM8 8.500H16V16L8 15Z" fill="#fff"/></svg></button>
  <label class="search">
    <svg viewBox="0 0 16 16"><circle cx="10" cy="6" r="5"/><path d="M6.500 9.500L1 15"/></svg>
    <input type="text" placeholder="Ketik di sini untuk mencari">
  </label>
  <button aria-label="Task view"><svg width="18" height="18" viewBox="0 0 18 18" fill="none" stroke="#fff"><path d="M1 1V3.500H11V1M1.500 6.500H11.500V12.500H1.500ZM1 17V15.500H11V17M15.500 1V17M14 6.500H17"/></svg></button>
  <button aria-label="Explorer"><svg width="22" height="22" viewBox="0 0 22 22"><path d="M0 0H9L11 3H22V20H0Z" fill="#e8a012"/><path d="M0 4H22V20H0Z" fill="#ffd767"/><path d="M4 22V13H18V22H14V17H8V22Z" fill="#2f8fdb"/></svg></button>
  <button class="mail" aria-label="Mail"><svg width="24" height="24" viewBox="0 0 24 24"><path d="M0 8L12 0L24 8V22H0Z" fill="#0b62b5"/><path d="M3 8H21V14H3Z" fill="#fff"/><path d="M0 8L12 15L24 8V22H0Z" fill="#2ba5ee"/></svg><span>12</span></button>
  <button aria-label="Paint 3D"><svg width="20" height="26" viewBox="0 0 20 26"><path d="M10 0C13 6 19 10 19 17A9 9 0 0 1 1 17C1 10 8 7 10 0Z" fill="url(#drop)"/><path d="M10 0C13 6 19 10 19 15C15 14 12 13 9 9C7 7 10 3 10 0Z" fill="#ffc834"/><path d="M1 17C7 14 11 22 18 20A9 9 0 0 1 2 21Z" fill="#14b0f5"/></svg></button>
  <button class="current" aria-label="Proteus"><svg width="24" height="24"><use href="#proteus"/></svg></button>
  <div class="tray">
    <svg width="12" height="8" viewBox="0 0 12 8"><path d="M0 7L6 1L12 7"/></svg>
    <svg width="14" height="16" viewBox="0 0 14 16"><path d="M3 2Q6 0 9 2M3 14Q6 16 9 14M1.500 4.500H9.500V11.500H1.500ZM10 7L13 5V11L10 9"/></svg>
    <svg width="14" height="14" viewBox="0 0 14 14"><path d="M1 13A12 12 0 0 1 13 1M4 13A9 9 0 0 1 13 4M7 13A6 6 0 0 1 13 7M10 13A3 3 0 0 1 13 10"/></svg>
    <svg width="16" height="10" viewBox="0 0 16 10"><path d="M.500 1.500H13.500V8.500H.500ZM15 4V6"/><path d="M2 3H8V7H2Z" fill="#fff"/></svg>
    <span class="lang">IND</span>
    <time>10.55<br>03/07/2021</time>
    <svg width="18" height="18" viewBox="0 0 18 18"><path d="M1 2H17V13H11L9 15.500L7 13H1Z"/></svg>
  </div>
</footer>

</body>
</html>
```
FILE: styles.css
```css
* {
  box-sizing: border-box;
}

body {
  margin: 0;
  height: 100vh;
  display: flex;
  flex-direction: column;
  overflow: hidden;
  background: #e3eaf1;
  font-family: "Liberation Sans", sans-serif;
  font-size: 11px;
  color: #000;
}

h1, h2, h3, p, ul {
  margin: 0;
  padding: 0;
  font-weight: normal;
}

ul {
  list-style: none;
}

a {
  color: inherit;
  text-decoration: none;
}

button {
  border: 0;
  padding: 0;
  background: none;
  font: inherit;
  color: inherit;
  display: flex;
  align-items: center;
  justify-content: center;
}

input {
  margin: 0;
  font: inherit;
}

.defs {
  position: absolute;
  width: 0;
  height: 0;
}

/* Title and menu */
.titlebar {
  display: flex;
  align-items: center;
  height: 23px;
  flex: none;
  padding-right: 2px;
  background: #0078d7;
  color: #fff;
}

.app-icon {
  width: 16px;
  height: 16px;
  margin: 0 5px 0 2px;
  color: #c9b98a;
}

.titlebar h1 {
  flex: 1;
  font: 12px Roboto, sans-serif;
}

.titlebar button {
  width: 46px;
  height: 21px;
  align-self: flex-start;
}

.titlebar button svg {
  width: 12px;
  height: 12px;
  fill: none;
  stroke: #fff;
}

.menubar {
  display: flex;
  height: 20px;
  flex: none;
  background: #fff;
  border-bottom: 2px solid #f0f0f0;
  font: 12px/19px Roboto, sans-serif;
}

.menubar a {
  padding: 0 7px;
}

/* Toolbars */
.toolbars {
  display: flex;
  gap: 6px;
  height: 27px;
  flex: none;
}

.group {
  display: flex;
  align-items: center;
  padding: 0 2px 0 10px;
  border-right: 1px solid #a5c6da;
  border-bottom: 1px solid #a5c6da;
  background:
    repeating-linear-gradient(#a4b6c3 0 2px, transparent 2px 5px) 3px 2px / 3px 22px no-repeat,
    linear-gradient(#e9f4fa, #d5e9f4 50%, #b8daec);
}

.group.first {
  padding: 0 1px 0 9px;
}

.group.last {
  margin-left: 3px;
  padding-left: 11px;
}

.group button {
  width: 21px;
  height: 22px;
}

.group svg {
  width: 16px;
  height: 16px;
}

.sep {
  width: 2px;
  height: 18px;
  margin: 0 3px;
  background: #a8b4bc;
  border-right: 1px solid #fff;
}

.group .on,
.mode-bar .on {
  background: #b9d8ea;
  border: 1px solid #6fa0c2;
}

.dim svg {
  opacity: 0.85;
}

/* Document tabs */
.tabs {
  display: flex;
  height: 33px;
  flex: none;
  padding-top: 5px;
  background: linear-gradient(transparent 26px, #6d9dc2 26px 27px, #b5d7ea 27px);
}

.tab {
  position: relative;
  isolation: isolate;
  display: flex;
  align-items: center;
  height: 22px;
  padding: 0 10px 0 20px;
  color: #222;
}

.tab::before,
.tab::after {
  content: "";
  position: absolute;
  z-index: -1;
  top: 0;
  bottom: 1px;
  background: linear-gradient(#e4e4e4, #d3d6d9);
  border-top: 1px solid #b9bec3;
}

.tab::before {
  left: 0;
  width: 30px;
  transform: skewX(-45deg);
  transform-origin: bottom;
  border-left: 1px solid #b9bec3;
}

.tab::after {
  left: 22px;
  right: 0;
}

.tab.active {
  margin-left: -11px;
  padding-right: 11px;
  color: #1c4766;
}

.tab.active a {
  font-size: 12px;
  font-weight: bold;
}

.tab.active::before,
.tab.active::after {
  bottom: 0;
  background: linear-gradient(#e8f3fa, #bcdcee);
  border-color: #6d9dc2;
}

.tab.active::after {
  border-right: 1px solid #6d9dc2;
}

.tab .icon {
  width: 16px;
  height: 16px;
  margin-right: 6px;
}

.tab button {
  margin-left: 9px;
}

.tab button svg {
  width: 8px;
  height: 8px;
  stroke: #333;
  stroke-width: 1.5;
}

/* Workspace */
.workspace {
  position: relative;
  display: flex;
  flex: 1;
  min-height: 0;
  padding-right: 4px;
  background: linear-gradient(90deg, #e3eaf1 177px, #b0cfe0 177px);
}

.mode-bar {
  display: flex;
  flex-direction: column;
  align-self: flex-start;
  width: 25px;
  margin-left: 2px;
  padding: 11px 4px 2px 0;
  border-right: 1px solid #a5c6da;
  border-bottom: 1px solid #a5c6da;
  background:
    repeating-linear-gradient(90deg, #a4b6c3 0 2px, #eef6fa 2px 4px) 0 3px / 24px 3px no-repeat,
    linear-gradient(90deg, #e2f1f8, #cfe6f2 60%, #b3d5e8);
}

.mode-bar button {
  width: 21px;
  height: 22px;
}

.mode-bar svg {
  width: 16px;
  height: 16px;
}

.mode-bar .sep {
  width: 21px;
  height: 2px;
  margin: 1px 0;
  border: 0;
  border-bottom: 1px solid #fff;
}

.mode-bar .letter {
  font: bold 18px "Liberation Serif", serif;
  color: #222;
}

.orient {
  width: 26px;
  margin-left: 1px;
  padding: 11px 0 2px 2px;
  border-right: 0;
}

.orient input {
  width: 22px;
  height: 15px;
  margin: 2px 0 4px 2px;
  border: 0;
  padding: 0 1px;
  background: #fff;
}

.orient .sep {
  margin: 1px 0 1px 2px;
}

.side {
  display: flex;
  flex-direction: column;
  width: 121px;
  margin: 0 4px 0 2px;
}

.overview {
  width: 121px;
  height: 101px;
  border: 1px solid #6a6a6a;
  background: #dfdfce;
}

.list-head {
  display: flex;
  align-items: center;
  height: 25px;
  margin-top: 4px;
  border: 1px solid #6a6a6a;
  background: linear-gradient(#e9f4fa, #b8daec);
}

.list-head button {
  width: 16px;
  height: 16px;
  margin-left: 2px;
  border: 1px solid #1c6fd0;
  border-radius: 3px;
  background: #2d8df0;
  color: #fff;
  font-size: 14px;
}

.list-head h2 {
  flex: 1;
  padding-left: 4px;
  font-size: 11px;
  text-align: center;
}

.terminals {
  flex: 1;
  padding-top: 1px;
  border: 1px solid #6a6a6a;
  border-top: 0;
  background: #fff;
  line-height: 13px;
}

.terminals li {
  margin: 0 1px;
  padding-left: 2px;
}

.terminals .selected {
  background: #0078d7;
  color: #fff;
}

.sheet {
  flex: 1;
  overflow: hidden;
  border: 1px solid #6a6a6a;
  background: #dfdfce;
}

.sheet svg {
  display: block;
  width: 100%;
  height: 100%;
}

.wire {
  fill: none;
  stroke: #004000;
  stroke-width: 2;
}

.part {
  fill: #c8c8a8;
  stroke: #800000;
  stroke-width: 2;
}

.readout {
  font-size: 11px;
  fill: #00f000;
  text-anchor: middle;
}

.unit {
  font-size: 9px;
  font-style: italic;
  fill: #800000;
  stroke: none;
  text-anchor: middle;
}

.label {
  font-size: 11px;
}

.name {
  font-size: 16px;
}

/* Oscilloscope window */
.scope {
  position: absolute;
  right: 5px;
  bottom: 0;
  width: 689px;
  background: #000;
  box-shadow: 0 3px 10px rgba(0, 0, 0, 0.4);
}

.scope > header {
  display: flex;
  align-items: center;
  height: 26px;
  padding: 0 2px 0 3px;
  background: #0078d7;
  color: #fff;
}

.scope > header h2 {
  flex: 1;
  font: 12px Roboto, sans-serif;
}

.scope > header button {
  width: 19px;
  height: 19px;
  background: #c75050;
  font-weight: bold;
}

.scope-body {
  display: grid;
  grid-template-columns: 407px 1fr;
  height: 424px;
}

.plot {
  display: flex;
  flex-direction: column;
  padding: 1px 1px 2px;
}

.plot > svg {
  width: 406px;
  height: 406px;
  border: 2px solid #d0d0d0;
  background: #000;
}

.trace-a,
.trace-c {
  fill: none;
  stroke: #ff0;
  shape-rendering: crispEdges;
}

.trace-c {
  stroke: #e0107f;
}

.time,
.va,
.vc {
  font-size: 10px;
  fill: #8a8a8a;
}

.va {
  fill: #ff0;
}

.vc {
  fill: #e0107f;
}

.scroll {
  display: flex;
  height: 16px;
  background: #f0f0f0;
}

.scroll button {
  width: 16px;
}

.scroll svg {
  width: 8px;
  height: 8px;
  fill: none;
  stroke: #444;
  stroke-width: 2;
}

.scroll input {
  flex: 1;
  appearance: none;
  background: none;
}

.scroll input::-webkit-slider-thumb {
  appearance: none;
  width: 17px;
  height: 14px;
  background: #cdcdcd;
}

.panels {
  display: grid;
  grid-template-columns: repeat(3, 1fr);
  grid-template-rows: 212px 210px;
  gap: 0 1px;
  padding: 0 1px 2px;
  font-size: 9px;
  color: #222;
}

.panel {
  border: 1px solid #ddd;
  border-right: 0;
  background: #a9a9ab;
}

.panel h3 {
  height: 26px;
  border-bottom: 1px solid #000;
  font-size: 12px;
  font-weight: bold;
  line-height: 27px;
  text-align: center;
}

.panel.trigger h3,
.panel.horizontal h3 {
  padding-right: 8px;
}

.panel.ch-a h3,
.panel.ch-b h3,
.panel.ch-c h3,
.panel.ch-d h3 {
  padding-right: 4px;
}

.trigger h3, .trigger .updown { color: #f29ca0; }
.horizontal h3, .horizontal .dial { color: #e8791c; }
.ch-a h3, .ch-a .updown, .ch-a .dial, .a { color: #ffff00; }
.ch-b h3, .ch-b .updown, .ch-b .dial, .b { color: #0c8fe0; }
.ch-c h3, .ch-c .updown, .ch-c .dial, .c { color: #e0107f; }
.ch-d h3, .ch-d .updown, .ch-d .dial, .d { color: #0a8c3c; }

.upper {
  display: grid;
  grid-template-columns: 8px 39px 1fr;
  height: 95px;
  padding: 1px 2px 0 1px;
}

.updown {
  width: 8px;
  height: 24px;
  margin-top: 38px;
}

.position {
  display: flex;
  flex-direction: column;
  align-items: center;
  line-height: 12px;
}

.wheel {
  position: relative;
  width: 39px;
  height: 79px;
  padding: 1px 6px;
  border: 1px solid #000;
  box-shadow: inset 0 0 0 1px #ccc;
}

.wheel::before,
.wheel::after {
  content: "";
  position: absolute;
  top: 32px;
  left: 1px;
  border: 5px solid transparent;
  border-left-color: red;
  border-right-width: 0;
}

.wheel::after {
  left: auto;
  right: 1px;
  border: 5px solid transparent;
  border-right-color: red;
  border-left-width: 0;
}

.drum {
  height: 75px;
  padding-top: 6px;
  border: 1px solid #333;
  background:
    repeating-linear-gradient(transparent 0 3px, #333 3px 4px) left / 3px 100% no-repeat,
    repeating-linear-gradient(transparent 0 3px, #333 3px 4px) right / 3px 100% no-repeat,
    linear-gradient(#5c5c5c, #aaa 35%, #fff 50%, #aaa 65%, #5c5c5c);
}

.drum b {
  display: flex;
  justify-content: center;
  font-size: 9px;
  font-weight: normal;
  line-height: 20px;
}

.wheel.flat {
  width: 80px;
  height: 39px;
  padding: 6px 1px;
}

.flat .drum {
  height: 25px;
  background: linear-gradient(90deg, #5c5c5c, #aaa 35%, #fff 50%, #aaa 65%, #5c5c5c);
}

.wheel.flat::before {
  top: 0;
  left: 34px;
  border: 5px solid transparent;
  border-top-color: red;
  border-bottom-width: 0;
}

.wheel.flat::after {
  top: auto;
  bottom: 0;
  right: 34px;
  border: 5px solid transparent;
  border-bottom-color: red;
  border-top-width: 0;
}

.switches {
  display: flex;
  flex-direction: column;
  align-items: flex-end;
  gap: 1px;
}

.coupling {
  display: flex;
  gap: 2px;
  margin-bottom: 2px;
  text-align: right;
  line-height: 14px;
}

.coupling ul {
  padding-top: 5px;
}

.edge {
  margin-top: 8px;
}

.edge svg {
  width: 8px;
  height: 34px;
  fill: none;
  stroke: #222;
}

.coupling input {
  margin-top: 1px;
}

.switches label,
.options label {
  display: flex;
  align-items: center;
  justify-content: flex-end;
  gap: 2px;
  white-space: nowrap;
}

input[type="checkbox"] {
  appearance: none;
  width: 15px;
  height: 15px;
  border: 1px solid #111;
  border-top-color: #999;
  background: radial-gradient(circle at 40% 40%, #aaa, #333 80%);
}

input[type="checkbox"]:checked {
  background: radial-gradient(circle at 40% 40%, #fff, #f3b3b5 90%);
}

.coupling input,
.source input {
  appearance: none;
  width: 14px;
  height: 62px;
  padding: 2px 1px;
  border: 1px solid #000;
  box-shadow: inset 0 0 0 1px #ddd;
  background: linear-gradient(#000, #000) center / 2px calc(100% - 10px) no-repeat #a9a9ab;
}

.coupling input {
  writing-mode: vertical-lr;
}

.trigger .coupling input {
  height: 34px;
}

.coupling input::-webkit-slider-thumb {
  appearance: none;
  width: 10px;
  height: 14px;
  border: 1px solid #555;
  background: repeating-linear-gradient(#eee 0 2px, #777 2px 3px);
}

.options {
  display: flex;
  flex-direction: column;
  align-items: flex-end;
  gap: 1px;
  padding-right: 2px;
  margin-top: -2px;
}

.source {
  display: flex;
  flex-direction: column;
  align-items: center;
  margin-top: 6px;
  padding-right: 2px;
  line-height: 11px;
}

.source p {
  display: flex;
  align-items: center;
  gap: 8px;
}

.source p b {
  font-size: 9px;
}

.source p svg {
  width: 11px;
  height: 6px;
  fill: none;
  stroke: #e8791c;
}

.source input {
  width: 64px;
  height: 14px;
  padding: 1px 2px;
  background: linear-gradient(#000, #000) center / calc(100% - 10px) 2px no-repeat #a9a9ab;
}

.source input::-webkit-slider-thumb {
  appearance: none;
  width: 16px;
  height: 10px;
  border: 1px solid #555;
  background: repeating-linear-gradient(90deg, #eee 0 2px, #777 2px 3px);
}

.timebase {
  display: flex;
  flex-direction: column;
  align-items: center;
  height: 95px;
  padding: 4px 2px 0 0;
}

.timebase .source {
  margin: 0;
  padding: 0;
}

.timebase .source input {
  width: 79px;
}

.timebase span {
  margin-top: 2px;
  line-height: 12px;
}

.dial {
  position: relative;
  height: 88px;
}

.dial svg {
  display: block;
  width: 90px;
  height: 88px;
  margin: 0 auto;
}

.dial-text,
.dial-unit {
  font-size: 8px;
  fill: #222;
  text-anchor: middle;
}

.dial-unit {
  font-size: 9px;
}

/* The readout box sits over the foot of the dial */
.dial input {
  position: absolute;
  left: 50%;
  bottom: 1px;
  width: 36px;
  height: 13px;
  margin-left: -18px;
  padding: 0 1px;
  border: 1px solid #000;
  background: #fff;
  color: #1a1a80;
  font-size: 10px;
}

/* Simulation bar */
.statusbar {
  display: flex;
  gap: 6px;
  height: 29px;
  flex: none;
  padding-top: 3px;
  line-height: 25px;
}

.statusbar > * {
  background:
    repeating-linear-gradient(#a4b6c3 0 2px, transparent 2px 5px) 4px 1px / 3px 24px no-repeat,
    linear-gradient(#e4f1f8, #b3d9ee);
}

.transport {
  display: flex;
  align-items: center;
  width: 303px;
  padding-left: 11px;
  border-right: 1px solid #a5c6da;
}

.transport button {
  width: 36px;
  height: 24px;
}

.transport .info {
  width: 30px;
}

.transport svg {
  width: 14px;
  height: 14px;
}

.transport span {
  flex: 1;
  padding-right: 4px;
  text-align: center;
}

.statusbar p {
  width: 852px;
  padding-left: 12px;
  color: #003c00;
  border-right: 1px solid #a5c6da;
}

.tail {
  flex: 1;
}

/* Windows taskbar */
.taskbar {
  display: flex;
  height: 40px;
  flex: none;
  background: #1d1d1d;
  color: #fff;
  font-family: "Open Sans", sans-serif;
}

.taskbar > button {
  width: 49px;
}

.taskbar .start {
  width: 48px;
}

.start svg {
  width: 16px;
  height: 16px;
}

.search {
  display: flex;
  align-items: center;
  gap: 12px;
  width: 344px;
  padding-left: 11px;
  border: 1px solid #5a5a5a;
  background: #333;
}

.search svg {
  width: 16px;
  height: 16px;
  fill: none;
  stroke: #eee;
}

.search input {
  flex: 1;
  border: 0;
  padding: 0;
  background: none;
  font-size: 14px;
}

.search input::placeholder {
  color: #ccc;
}

.mail {
  position: relative;
}

.mail span {
  position: absolute;
  right: 2px;
  bottom: 4px;
  width: 18px;
  height: 18px;
  border: 1px solid #aaa;
  border-radius: 50%;
  background: #222;
  font-size: 10px;
  font-weight: bold;
  line-height: 16px;
}

.taskbar .current {
  background: #4a4a4a;
  border-bottom: 2px solid #76b9ed;
  color: #c9b98a;
}

.tray {
  display: flex;
  align-items: center;
  gap: 11px;
  margin-left: auto;
  margin-right: 4px;
  padding-right: 19px;
  border-right: 1px solid #555;
  font-size: 12px;
}

.tray svg {
  fill: none;
  stroke: #fff;
}

.tray .lang {
  font-size: 11px;
}

.tray time {
  font-size: 11px;
  line-height: 18px;
  text-align: center;
}

.tray svg:last-child {
  margin-left: 6px;
}
```
